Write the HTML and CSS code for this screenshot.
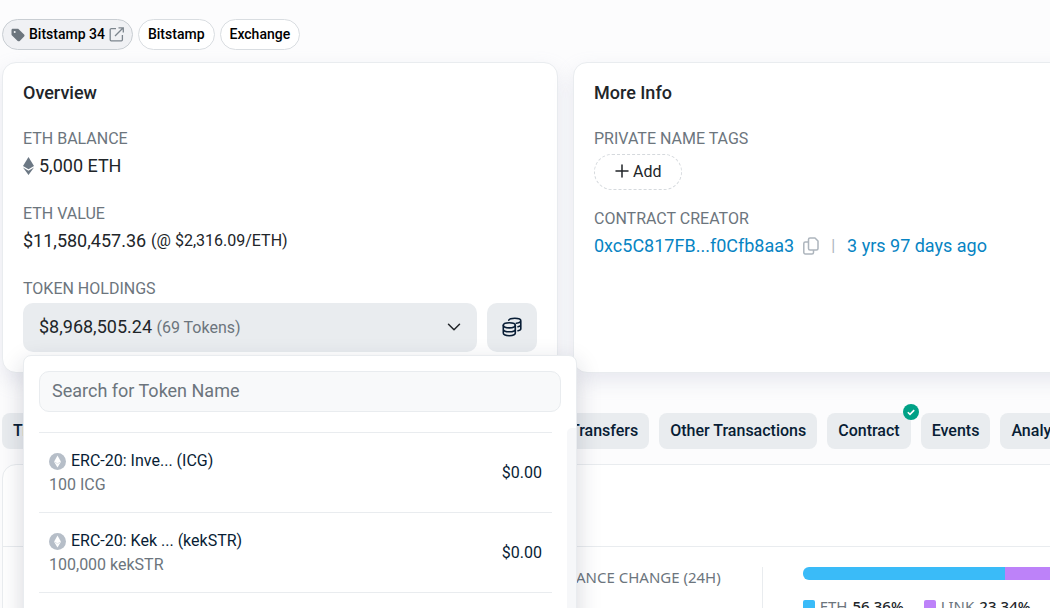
FILE: index.html
```html
<!DOCTYPE html>
<html lang="en">
<head>
    <meta charset="UTF-8">
    <meta name="viewport" content="width=device-width, initial-scale=1.0">
    <title>Bitstamp 34 | Address</title>
    <link rel="stylesheet" href="styles.css">
</head>
<body>
    <main class="page">
        <div class="tags">
            <a href="#" class="tag tag-main">
                <svg width="14" height="14" viewBox="0 0 14 14" fill="#6c757d"><path fill-rule="evenodd" d="M.5 2.200C.5 1.300 1.200.8 2 .8h4.600c.5 0 .8.1 1.100.4l5.400 5.300c.6.6.6 1.500 0 2.100l-4.300 4.300c-.6.6-1.500.6-2.100 0L1 7.600C.7 7.300.5 6.900.5 6.500zM3.700 5a1 1 0 1 0 0-2 1 1 0 0 0 0 2z"/></svg>
                Bitstamp 34
                <svg width="15" height="15" viewBox="0 0 15 15" fill="none" stroke="#7c858d" stroke-width="1.3"><path d="M7 1.6H2.2a1 1 0 0 0-1 1v10.2a1 1 0 0 0 1 1h10.2a1 1 0 0 0 1-1V8M9.5.8h4.8v4.8M14 1 6 9"/></svg>
            </a>
            <a href="#" class="tag">Bitstamp</a>
            <a href="#" class="tag">Exchange</a>
        </div>

        <div class="cards">
            <section class="card">
                <h2>Overview</h2>
                <div class="field">
                    <h3>ETH BALANCE</h3>
                    <div class="value">
                        <svg class="eth" width="11" height="18" viewBox="0 0 11 18" fill="#6c7884"><path d="M5.500 0 11 9 5.500 12.300 0 9z"/><path d="M0 10.500 5.500 13.700 11 10.500 5.500 18z"/></svg>
                        5,000 ETH
                    </div>
                </div>
                <div class="field">
                    <h3>ETH VALUE</h3>
                    <div class="value">$11,580,457.36 <span class="rate">(@ $2,316.09/ETH)</span></div>
                </div>
                <div class="field">
                    <h3>TOKEN HOLDINGS</h3>
                    <div class="holdings">
                        <button class="holdings-toggle" aria-expanded="true">
                            <span>$8,968,505.24 <small>(69 Tokens)</small></span>
                            <svg width="14" height="8" viewBox="0 0 14 8" fill="none" stroke="#212529" stroke-width="1.5" stroke-linecap="round" stroke-linejoin="round"><path d="M1.500 1.200 7 6.700l5.500-5.500"/></svg>
                        </button>
                        <button class="holdings-coins" aria-label="View token holdings">
                            <svg width="20" height="20" viewBox="0 0 20 20" fill="none" stroke="#081d35" stroke-width="1.600" stroke-linecap="round"><ellipse cx="7.300" cy="8.300" rx="6" ry="2.600"/><path d="M1.300 8.300v7.800c0 1.500 2.700 2.600 6 2.600s6-1.100 6-2.600V8.300M1.300 12.200c0 1.500 2.700 2.600 6 2.600s6-1.100 6-2.600M6.800 3.200C7.500 2 9.900 1.300 12.800 1.300c3.400 0 6 1.100 6 2.500s-2 2.200-4.500 2.500M18.800 3.800v8c0 1-1 1.600-2.800 2M18.800 7.800c0 1-1 1.600-2.800 2"/></svg>
                        </button>

                        <div class="dropdown">
                            <div class="search">
                                <input type="text" placeholder="Search for Token Name" aria-label="Search for Token Name">
                            </div>
                            <div class="list-wrap">
                                <ul class="token-list">
                                    <li>
                                        <div>
                                            <a href="#" class="token"><svg width="17" height="17" viewBox="0 0 17 17"><circle cx="8.500" cy="8.500" r="8.500" fill="#b6bec8"/><path d="M8.500 2.500 12 8.700 8.500 14.500 5 8.700z" fill="#fff"/><path d="m5 8.700 3.500 2 3.500-2" fill="none" stroke="#d5dae0" stroke-width=".8"/></svg>ERC-20: Inve... (ICG)</a>
                                            <span class="amount">100 ICG</span>
                                        </div>
                                        <span class="price">$0.00</span>
                                    </li>
                                    <li>
                                        <div>
                                            <a href="#" class="token"><svg width="17" height="17" viewBox="0 0 17 17"><circle cx="8.500" cy="8.500" r="8.500" fill="#b6bec8"/><path d="M8.500 2.500 12 8.700 8.500 14.500 5 8.700z" fill="#fff"/><path d="m5 8.700 3.500 2 3.500-2" fill="none" stroke="#d5dae0" stroke-width=".8"/></svg>ERC-20: Kek ... (kekSTR)</a>
                                            <span class="amount">100,000 kekSTR</span>
                                        </div>
                                        <span class="price">$0.00</span>
                                    </li>
                                    <li></li>
                                </ul>
                                <div class="track"></div>
                            </div>
                        </div>
                    </div>
                </div>
            </section>

            <section class="card">
                <h2>More Info</h2>
                <div class="field name-tags">
                    <h3>PRIVATE NAME TAGS</h3>
                    <button class="add">
                        <svg width="14" height="14" viewBox="0 0 14 14" stroke="#212529" stroke-width="1.500" stroke-linecap="round"><path d="M7 1v12M1 7h12"/></svg>
                        Add
                    </button>
                </div>
                <div class="field">
                    <h3>CONTRACT CREATOR</h3>
                    <div class="value creator">
                        <a href="#">0xc5C817FB...f0Cfb8aa3</a>
                        <button class="copy" aria-label="Copy address">
                            <svg width="16" height="18" viewBox="0 0 16 18" fill="none" stroke="#adb5bd" stroke-width="1.500" stroke-linejoin="round"><path d="M7 1h5l3 3v7.500a1.500 1.500 0 0 1-1.500 1.500H7a1.500 1.500 0 0 1-1.500-1.500v-9A1.500 1.500 0 0 1 7 1zM5.500 5H2.300A1.500 1.500 0 0 0 .8 6.500v9A1.500 1.500 0 0 0 2.300 17H9a1.500 1.500 0 0 0 1.500-1.500V13"/></svg>
                        </button>
                        <span class="bar">|</span>
                        <a href="#">3 yrs 97 days ago</a>
                    </div>
                </div>
            </section>
        </div>

        <nav class="tabs">
            <a href="#" class="tab">Transactions</a>
            <a href="#" class="tab">Internal Transactions</a>
            <a href="#" class="tab">Token Transfers (ERC-20)</a>
            <a href="#" class="tab">NFT Transfers</a>
            <a href="#" class="tab">Other Transactions</a>
            <a href="#" class="tab">Contract
                <svg class="verified" width="16" height="16" viewBox="0 0 16 16"><circle cx="8" cy="8" r="8" fill="#00a186"/><path d="m4.800 8.200 2.200 2.200 4.200-4.300" fill="none" stroke="#fff" stroke-width="1.600"/></svg>
            </a>
            <a href="#" class="tab">Events</a>
            <a href="#" class="tab">Analytics</a>
        </nav>

        <section class="panel">
            <div class="panel-head"></div>
            <div class="stats">
                <div class="stat"></div>
                <div class="stat">ETH BALANCE CHANGE (24H)</div>
                <div class="allocation">
                    <div class="meter">
                        <div class="blue" style="width: 56.36%"></div>
                        <div class="purple" style="width: 23.34%"></div>
                        <div class="grey"></div>
                    </div>
                    <div class="legend">
                        <span><i class="blue"></i>ETH <b>56.36%</b></span>
                        <span><i class="purple"></i>LINK <b>23.34%</b></span>
                    </div>
                </div>
            </div>
        </section>
    </main>
</body>
</html>
```
FILE: styles.css
```css
* {
    box-sizing: border-box;
}
body {
    margin: 0;
    font-family: Roboto, sans-serif;
    font-size: 18px;
    line-height: 27px;
    color: #212529;
    background: #fcfcfd;
}
h2, h3, ul {
    margin: 0;
    padding: 0;
}
a {
    text-decoration: none;
}
button, input {
    font: inherit;
    color: inherit;
}
button {
    cursor: pointer;
}
svg {
    flex-shrink: 0;
}
.page {
    height: 100vh;
    padding: 19px 0 0 2px;
    overflow: hidden;
}

/* name tags */
.tags {
    display: flex;
    gap: 5px;
    margin-bottom: 12px;
}
.tag {
    display: flex;
    align-items: center;
    gap: 4px;
    height: 31px;
    padding: 0 9px;
    border: 1px solid #d9dde1;
    border-radius: 16px;
    background: #fff;
    color: #000;
    font-size: 14px;
    font-weight: 500;
}
.tag-main {
    padding: 0 8px;
    border-color: #c9ced3;
    background: #f0f1f4;
}

/* cards, the row runs past the right edge */
.cards {
    display: grid;
    grid-template-columns: 1fr 1fr;
    gap: 15px;
    margin-right: -79px;
}
.card {
    padding: 16px 20px 20px;
    border: 1px solid #e9ecef;
    border-radius: 14px;
    background: #fff;
    box-shadow: 0 8px 20px rgba(150, 155, 185, 0.2);
}
.card h2 {
    margin-bottom: 21px;
    font-size: 18px;
    font-weight: 500;
}
.card h3 {
    margin-bottom: 1px;
    font-size: 16px;
    line-height: 24px;
    font-weight: 400;
    color: #6c757d;
}
.field + .field {
    margin-top: 23px;
}
.value {
    display: flex;
    align-items: center;
    gap: 5px;
}
.rate {
    font-size: 16px;
}

/* token holdings */
.holdings {
    position: relative;
    display: flex;
    gap: 10px;
    margin-top: 2px;
}
.holdings button {
    height: 49px;
    border: 0;
    border-radius: 10px;
    background: #e9ecef;
}
.holdings-toggle {
    display: flex;
    flex: 1;
    align-items: center;
    justify-content: space-between;
    padding: 0 16px 2px;
}
.holdings small {
    font-size: 16px;
    color: #6c757d;
}
.holdings .holdings-coins {
    display: flex;
    width: 50px;
    align-items: center;
    justify-content: center;
    padding: 0 0 2px;
}
.dropdown {
    position: absolute;
    z-index: 2;
    top: 52px;
    left: 0;
    width: calc(100% + 40px);
    border: 1px solid #e9ecef;
    border-radius: 8px;
    background: #fff;
    box-shadow: 0 8px 24px rgba(30, 35, 60, 0.18);
}
.search {
    padding: 15px 15px 16px;
}
.search input {
    display: block;
    width: 100%;
    height: 41px;
    padding: 0 12px 2px;
    border: 1px solid #e9ecef;
    border-radius: 10px;
    background: #f8f9fa;
}
.search input::placeholder {
    color: #6c757d;
    opacity: 1;
}
.list-wrap {
    display: flex;
    height: 260px;
    overflow: hidden;
}
.token-list {
    flex: 1;
    padding: 4px 15px 0;
    list-style: none;
}
.token-list li {
    display: flex;
    align-items: center;
    justify-content: space-between;
    padding: 16px 10px 15px;
    border-top: 1px solid #e9ecef;
    font-size: 16px;
    line-height: 24px;
}
.token {
    display: flex;
    align-items: center;
    gap: 5px;
    color: #081d35;
}
.amount {
    color: #6c757d;
}
.price {
    color: #081d35;
}
.track {
    width: 9px;
    border-radius: 5px 0 0 0;
    background: #f6f7f9;
}

/* more info */
.add {
    display: flex;
    align-items: center;
    gap: 4px;
    height: 36px;
    margin-top: 3px;
    padding: 0 20px 2px;
    border: 1px dashed #d5d9dd;
    border-radius: 18px;
    background: #fff;
    font-size: 16px;
}
.name-tags + .field {
    margin-top: 17px;
}
.creator {
    gap: 9px;
}
.creator a {
    color: #0784c3;
}
.copy {
    display: flex;
    padding: 0;
    border: 0;
    background: none;
}
.bar {
    padding: 0 3px;
    font-size: 16px;
    color: #adb5bd;
}

/* tabs */
.tabs {
    display: flex;
    gap: 10px;
    margin: 40px 0 15px;
}
.tab {
    position: relative;
    height: 36px;
    padding: 0 11px;
    border-radius: 8px;
    background: #e9ecef;
    color: #081d35;
    font-size: 16px;
    line-height: 36px;
    font-weight: 500;
    white-space: nowrap;
}
.verified {
    position: absolute;
    top: -9px;
    right: -8px;
}

/* portfolio */
.panel {
    margin-right: -133px;
    border: 1px solid #e9ecef;
    border-radius: 14px;
    background: #fff;
}
.panel-head {
    height: 82px;
    border-bottom: 1px solid #e9ecef;
}
.stats {
    display: grid;
    grid-template-columns: 495fr 246fr 400fr;
    padding: 20px;
    font-family: "Noto Sans", sans-serif;
    font-size: 15px;
    line-height: 20px;
    color: #6c757d;
}
.stat {
    border-right: 1px solid #e9ecef;
    white-space: nowrap;
}
.allocation {
    padding-left: 40px;
}
.meter {
    display: flex;
    height: 13px;
    border-radius: 6px;
    overflow: hidden;
}
.blue {
    background: #3abbf8;
}
.purple {
    background: #bd82f9;
}
.grey {
    flex: 1;
    background: #adb5bd;
}
.legend {
    display: flex;
    gap: 20px;
    margin-top: 16px;
}
.legend span {
    display: flex;
    align-items: center;
    gap: 5px;
}
.legend i {
    width: 12px;
    height: 12px;
    border-radius: 2px;
}
.legend b {
    font-weight: 500;
    color: #212529;
}
```
